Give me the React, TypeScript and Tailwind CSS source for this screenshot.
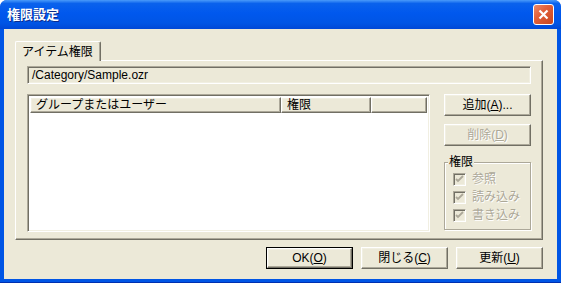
import React from "react"

const font = "font-['Liberation_Sans','Noto_Sans_CJK_JP',sans-serif]"
const raised =
  "border border-t-white border-l-white border-r-[#716F64] border-b-[#716F64] shadow-[inset_-1px_-1px_#ACA899,inset_1px_1px_#F1EFE2]"
const sunken =
  "border border-t-[#ACA899] border-l-[#ACA899] border-r-white border-b-white shadow-[inset_1px_1px_#716F64,inset_-1px_-1px_#F1EFE2]"
const disabledText = "text-[#ACA899] [text-shadow:1px_1px_0_#ffffff]"

function Button({
  children,
  disabled,
  isDefault,
  className = "",
}: {
  children: React.ReactNode
  disabled?: boolean
  isDefault?: boolean
  className?: string
}) {
  const face = (
    <div
      className={`flex h-full w-full items-center justify-center bg-[#ECE9D8] text-[12px] leading-none ${raised} ${
        disabled ? disabledText : "text-black"
      }`}
    >
      {children}
    </div>
  )
  if (isDefault) {
    return <div className={`border border-black ${className}`}>{face}</div>
  }
  return <div className={className}>{face}</div>
}

function CheckBox({ label }: { label: string }) {
  return (
    <div className="flex h-[18px] items-center">
      <div className={`h-[13px] w-[13px] shrink-0 bg-[#ECE9D8] ${sunken}`}>
        <svg width="11" height="11" viewBox="0 0 11 11">
          <path d="M2 5 L4 7 L9 2" fill="none" stroke="#ACA899" strokeWidth="1.8" />
        </svg>
      </div>
      <span className={`ml-[6px] text-[12px] leading-none ${disabledText}`}>{label}</span>
    </div>
  )
}

function TitleBar() {
  return (
    <div className="flex h-[29px] items-center rounded-t-[7px] bg-[linear-gradient(to_bottom,#4A9BFA_0%,#0A62EC_12%,#0058EE_45%,#0055E5_80%,#0048D6_100%)] pl-[7px] pr-[7px]">
      <span className="text-[13px] font-bold text-white [text-shadow:1px_1px_0_#0B2B8C]">
        権限設定
      </span>
      <div className="ml-auto flex h-[21px] w-[21px] items-center justify-center rounded-[3px] border border-white bg-[linear-gradient(135deg,#EB8A6A_0%,#E1603A_40%,#C9461F_100%)]">
        <svg width="11" height="11" viewBox="0 0 11 11">
          <path d="M1.5 1.5 L9.5 9.5 M9.5 1.5 L1.5 9.5" stroke="white" strokeWidth="2.2" />
        </svg>
      </div>
    </div>
  )
}

export default function App() {
  return (
    <div className={`h-[283px] w-[561px] bg-white ${font}`}>
      <div className="flex h-full flex-col rounded-t-[7px] border-b-[1px] border-[#0030B0] bg-[#0055E5]">
        <TitleBar />
        <div className="mb-[3px] ml-[4px] mr-[4px] flex flex-1 flex-col bg-[#ECE9D8] pl-[11px] pr-[14px] pt-[12px]">
          {/* tab strip */}
          <div className="flex h-[19px]">
            <div className="relative z-10 -mb-px flex h-[20px] items-center rounded-t-[2px] border-l border-t border-r border-l-white border-t-white border-r-[#716F64] bg-[#ECE9D8] pl-[6px] pr-[7px] text-[12px] leading-none text-black shadow-[inset_-1px_0_#ACA899]">
              アイテム権限
            </div>
          </div>
          {/* tab panel */}
          <div className="flex h-[180px] flex-col border border-t-white border-l-white border-r-[#716F64] border-b-[#716F64] pl-[11px] pr-[11px] pt-[5px] shadow-[inset_-1px_-1px_#ACA899]">
            <div className={`flex h-[18px] items-center bg-[#ECE9D8] pl-[4px] text-[12px] leading-none text-black ${sunken}`}>
              /Category/Sample.ozr
            </div>
            <div className="mt-[10px] flex">
              <div className={`flex h-[138px] w-[403px] flex-col bg-white p-[2px] ${sunken}`}>
                <div className="flex h-[16px] text-[12px] leading-none text-black">
                  <div className={`flex w-[251px] items-center pl-[5px] bg-[#ECE9D8] ${raised}`}>
                    グループまたはユーザー
                  </div>
                  <div className={`flex w-[90px] items-center pl-[5px] bg-[#ECE9D8] ${raised}`}>
                    権限
                  </div>
                  <div className={`flex-1 bg-[#ECE9D8] ${raised}`} />
                </div>
              </div>
              <div className="ml-[14px] flex w-[87px] flex-col">
                <Button className="h-[22px]">
                  <span>
                    追加(<u>A</u>)...
                  </span>
                </Button>
                <Button className="mt-[8px] h-[22px]" disabled>
                  <span>
                    削除(<u>D</u>)
                  </span>
                </Button>
                <div className="relative mt-[16px] h-[68px] border border-[#ACA899] pl-[8px] pt-[7px] shadow-[inset_1px_1px_#ffffff,1px_1px_#ffffff]">
                  <span className="absolute -top-[8px] left-[3px] bg-[#ECE9D8] px-[1px] text-[12px] leading-[14px] text-black">
                    権限
                  </span>
                  <CheckBox label="参照" />
                  <CheckBox label="読み込み" />
                  <CheckBox label="書き込み" />
                </div>
              </div>
            </div>
          </div>
          {/* bottom buttons */}
          <div className="mt-[7px] flex justify-end gap-[8px]">
            <Button className="h-[22px] w-[87px]" isDefault>
              <span>
                OK(<u>O</u>)
              </span>
            </Button>
            <Button className="h-[22px] w-[87px]">
              <span>
                閉じる(<u>C</u>)
              </span>
            </Button>
            <Button className="h-[22px] w-[87px]">
              <span>
                更新(<u>U</u>)
              </span>
            </Button>
          </div>
        </div>
      </div>
    </div>
  )
}
